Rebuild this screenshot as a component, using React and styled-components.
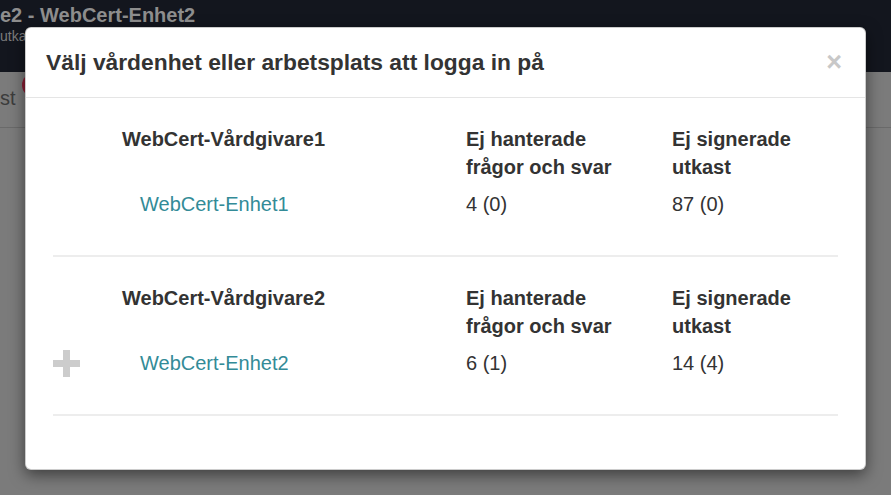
import styled, { createGlobalStyle } from "styled-components";

const Global = createGlobalStyle`
  html, body { margin: 0; padding: 0; }
  body {
    font-family: "Liberation Sans", Arial, sans-serif;
    background: #7b7b7b;
    overflow: hidden;
  }
`;

const Page = styled.div`
  position: relative;
  width: 891px;
  height: 495px;
  background: #7b7b7b;
  overflow: hidden;
`;

const TopBar = styled.div`
  height: 72px;
  background: #13161e;
  padding-top: 3px;
  box-sizing: border-box;
`;

const Crumb = styled.div`
  font-size: 20px;
  font-weight: bold;
  color: #8e8e8e;
  line-height: 24px;
`;

const Sub = styled.div`
  font-size: 14px;
  color: #7c7c7c;
  line-height: 18px;
`;

const SubBar = styled.div`
  position: relative;
  height: 55px;
  border-bottom: 1px solid #6a6a6a;
  display: flex;
  align-items: center;
`;

const Tab = styled.span`
  font-size: 20px;
  color: #3c3c3c;
  margin-top: -2px;
`;

const Badge = styled.span`
  position: absolute;
  left: 22px;
  top: 1px;
  width: 24px;
  height: 24px;
  border-radius: 50%;
  background: #8c1e34;
`;

const Modal = styled.div`
  position: absolute;
  left: 25px;
  top: 27px;
  width: 841px;
  height: 443px;
  box-sizing: border-box;
  background: #fff;
  border: 1px solid rgba(0, 0, 0, 0.2);
  border-radius: 6px;
  box-shadow: 0 5px 15px rgba(0, 0, 0, 0.5);
`;

const Header = styled.div`
  display: flex;
  justify-content: space-between;
  align-items: flex-start;
  padding: 19px 23px 20px 20px;
  border-bottom: 1px solid #e5e5e5;
`;

const Title = styled.h4`
  margin: 0;
  font-size: 22.8px;
  line-height: 30px;
  font-weight: bold;
  color: #333;
`;

const Close = styled.button`
  border: 0;
  background: none;
  padding: 0;
  margin-top: 3px;
  font-family: "Liberation Sans", Arial, sans-serif;
  font-size: 27px;
  line-height: 24px;
  font-weight: bold;
  color: #c8c8c8;
  cursor: pointer;
`;

const Body = styled.div`
  padding: 0 27px;
`;

const Group = styled.div`
  display: grid;
  grid-template-columns: 69px 344px 206px 1fr;
  row-gap: 9px;
  padding: 27px 0 37px;
  border-bottom: 2px solid #ededed;
  font-size: 20px;
  line-height: 28px;
  color: #333;
`;

const Heading = styled.div`
  font-weight: bold;
`;

const Unit = styled.a`
  padding-left: 18px;
  color: #338b97;
  text-decoration: none;
`;

const Cell = styled.div``;

const IconCell = styled.div`
  display: flex;
  align-items: center;
`;

const Plus = () => (
  <svg width="27" height="27" viewBox="0 0 27 27">
    <rect x="10" y="0" width="7" height="27" fill="#cccccc" />
    <rect x="0" y="10" width="27" height="7" fill="#cccccc" />
  </svg>
);

const groups = [
  { giver: "WebCert-Vårdgivare1", unit: "WebCert-Enhet1", questions: "4 (0)", drafts: "87 (0)", icon: false },
  { giver: "WebCert-Vårdgivare2", unit: "WebCert-Enhet2", questions: "6 (1)", drafts: "14 (4)", icon: true },
];

export default function App() {
  return (
    <Page>
      <Global />
      <TopBar>
        <Crumb>e2 - WebCert-Enhet2</Crumb>
        <Sub>utkast</Sub>
      </TopBar>
      <SubBar>
        <Tab>st</Tab>
        <Badge />
      </SubBar>
      <Modal>
        <Header>
          <Title>Välj vårdenhet eller arbetsplats att logga in på</Title>
          <Close>×</Close>
        </Header>
        <Body>
          {groups.map((g) => (
            <Group key={g.giver}>
              <Cell />
              <Heading>{g.giver}</Heading>
              <Heading>Ej hanterade<br />frågor och svar</Heading>
              <Heading>Ej signerade<br />utkast</Heading>
              <IconCell>{g.icon && <Plus />}</IconCell>
              <Unit href="#">{g.unit}</Unit>
              <Cell>{g.questions}</Cell>
              <Cell>{g.drafts}</Cell>
            </Group>
          ))}
        </Body>
      </Modal>
    </Page>
  );
}
